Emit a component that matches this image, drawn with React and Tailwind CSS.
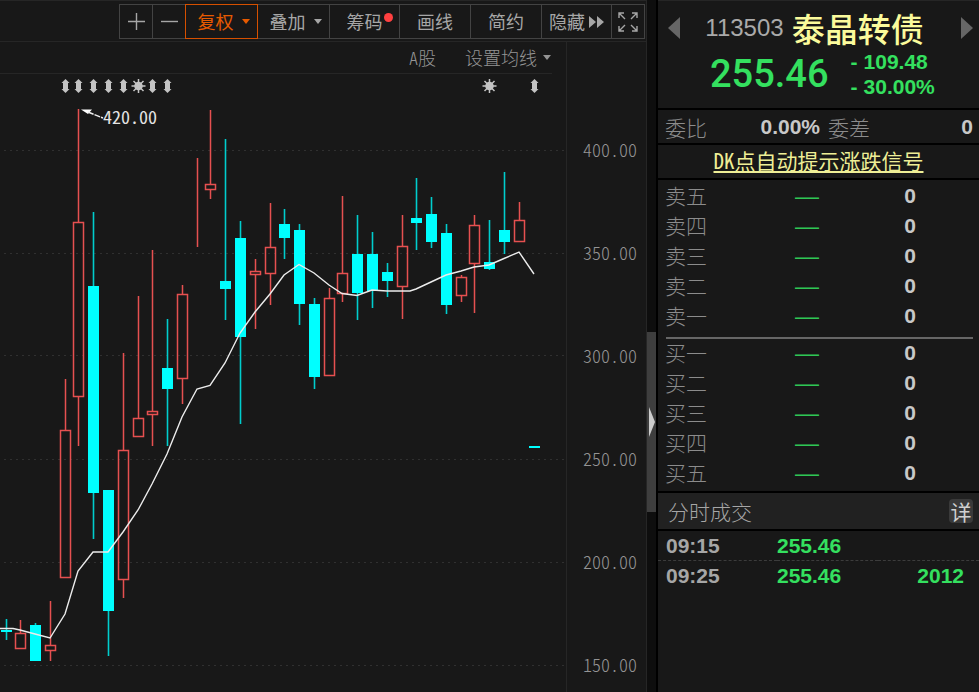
// x, high, body top, body bottom, low, direction
const candles = [
  [6, 619, 630, 632, 640, "down"],
  [20, 620, 633, 648, 648, "up"],
  [35, 623, 625, 661, 661, "down"],
  [50, 601, 645, 650, 661, "up"],
  [65, 379, 430, 577, 577, "up"],
  [78, 109, 222, 396, 446, "up"],
  [93, 212, 286, 493, 539, "down"],
  [108, 490, 490, 611, 656, "down"],
  [123, 353, 450, 579, 598, "up"],
  [138, 296, 418, 436, 436, "up"],
  [152, 250, 411, 414, 446, "up"],
  [167, 319, 368, 389, 446, "down"],
  [182, 285, 294, 378, 404, "up"],
  [197, 158, 199, 199, 247, "up"],
  [210, 110, 184, 189, 199, "up"],
  [225, 139, 281, 289, 320, "down"],
  [240, 221, 238, 337, 424, "down"],
  [255, 259, 271, 274, 329, "up"],
  [270, 203, 247, 273, 305, "up"],
  [284, 209, 224, 238, 259, "down"],
  [299, 224, 230, 304, 325, "down"],
  [314, 298, 304, 377, 389, "down"],
  [329, 288, 298, 375, 375, "up"],
  [342, 196, 273, 293, 302, "up"],
  [357, 215, 254, 293, 320, "down"],
  [372, 232, 254, 291, 308, "down"],
  [387, 263, 272, 281, 297, "down"],
  [402, 215, 246, 286, 319, "up"],
  [416, 178, 218, 223, 250, "down"],
  [431, 197, 214, 242, 248, "down"],
  [446, 224, 233, 305, 314, "down"],
  [461, 275, 277, 295, 302, "up"],
  [474, 215, 225, 263, 313, "up"],
  [489, 220, 262, 269, 270, "down"],
  [504, 172, 230, 242, 254, "down"],
  [519, 202, 220, 241, 241, "up"],
  [534, 446, 446, 448, 448, "down"],
];

const average =
  "0,628.5 13,628.5 20,630 35,634 50,638 65,614 78,571 93,552 108,552 123,532 138,510 152,484 167,454 182,417 197,389 210,385.5 225,363 240,333 255,312 270,294 284,275 299,264.5 314,273 329,285 342,293.5 357,295.5 372,290 387,291 410,291 416,289 431,282 446,275 461,271 474,267 489,265 504,258.5 519,252 534,274";

const gridLines = [150, 253, 355, 459, 562, 665];
const prices = ["400.00", "350.00", "300.00", "250.00", "200.00", "150.00"];
const arrows = [65, 78, 93, 108, 123, 152, 167, 534];
const stars = [138, 489];

const sells = ["卖五", "卖四", "卖三", "卖二", "卖一"];
const buys = ["买一", "买二", "买三", "买四", "买五"];

const trades = [
  { time: "09:15", price: "255.46", volume: "" },
  { time: "09:25", price: "255.46", volume: "2012" },
];

function Caret() {
  return (
    <svg width="8" height="5" viewBox="0 0 8 5" fill="currentColor" aria-hidden="true">
      <path d="M0 0H8L4 5Z" />
    </svg>
  );
}

function ToolButton({ className = "", active = false, children, ...rest }) {
  return (
    <button
      type="button"
      className={`relative -ml-px flex h-[35px] items-center justify-center border ${
        active
          ? "z-10 border-[#d65000] text-[#e65a00]"
          : "border-[#434343] text-[#a6a6a6]"
      } ${className}`}
      {...rest}
    >
      {children}
    </button>
  );
}

function Toolbar() {
  return (
    <div className="flex h-[42px] justify-end border-y border-[#262626] pt-[3px] pr-px text-[18px]">
      <ToolButton className="w-[34px]" aria-label="放大">
        <svg width="17" height="17" viewBox="0 0 17 17" stroke="currentColor" strokeWidth="1.4">
          <path d="M8.5 0V17M0 8.5H17" />
        </svg>
      </ToolButton>
      <ToolButton className="w-[34px]" aria-label="缩小">
        <svg width="17" height="17" viewBox="0 0 17 17" stroke="currentColor" strokeWidth="1.4">
          <path d="M0 8.5H17" />
        </svg>
      </ToolButton>
      <ToolButton className="w-[73px] gap-2 pl-1" active>
        复权 <Caret />
      </ToolButton>
      <ToolButton className="w-[73px] gap-2 pl-1">
        叠加 <Caret />
      </ToolButton>
      <ToolButton className="w-[71px]">
        筹码
        <span className="absolute top-2 right-1.5 size-[9px] rounded-full bg-[#ff4040]" />
      </ToolButton>
      <ToolButton className="w-[72px]">画线</ToolButton>
      <ToolButton className="w-[72px]">简约</ToolButton>
      <ToolButton className="w-[71px] gap-1">
        隐藏
        <svg width="15" height="12" viewBox="0 0 15 12" fill="currentColor">
          <path d="M0 0L7 6L0 12ZM8 0L15 6L8 12Z" />
        </svg>
      </ToolButton>
      <ToolButton className="w-[34px]" aria-label="全屏">
        <svg width="20" height="20" viewBox="0 0 20 20" fill="none" stroke="currentColor" strokeWidth="1.4">
          <path d="M1 6V1H6M1 1L7 7M14 1H19V6M19 1L13 7M1 14V19H6M1 19L7 13M14 19H19V14M19 19L13 13" />
        </svg>
      </ToolButton>
    </div>
  );
}

function Candle({ data }) {
  const [x, high, top, bottom, low, dir] = data;
  const cx = x + 0.5;
  if (dir === "down") {
    return (
      <g>
        <path d={`M${cx} ${high}V${low}`} stroke="#00cdcd" strokeWidth="1.6" />
        <rect x={x - 5} y={top} width="11" height={bottom - top} fill="#00ffff" />
      </g>
    );
  }
  return (
    <g stroke="#e65050" strokeWidth="1.5" fill="none">
      <path d={`M${cx} ${high}V${top}M${cx} ${bottom}V${low}`} />
      <rect x={x - 4.5} y={top + 0.5} width="10" height={bottom - top} />
    </g>
  );
}

function Chart() {
  return (
    <svg
      className="block w-full"
      viewBox="0 74 566 618"
      role="img"
      aria-label="K线图"
    >
      {gridLines.map((y) => (
        <path key={y} d={`M4 ${y + 0.5}H566`} stroke="#303030" strokeDasharray="2 4" />
      ))}
      {arrows.map((x) => (
        <path
          key={x}
          transform={`translate(${x + 0.5} 86)`}
          d="M0 -7L4 -3H2.5V3H4L0 7L-4 3H-2.5V-3H-4Z"
          fill="#c4c4c4"
        />
      ))}
      {stars.map((x) => (
        <g key={x} transform={`translate(${x + 0.5} 86)`} stroke="#c4c4c4" strokeWidth="1.5">
          <circle r="3.5" fill="#c4c4c4" />
          <path d="M0 -7V7M-7 0H7M-5 -5L5 5M-5 5L5 -5" />
        </g>
      ))}
      {candles.map((c) => (
        <Candle key={c[0]} data={c} />
      ))}
      <polyline points={average} fill="none" stroke="#ececec" strokeWidth="1.4" />
      <path d="M81 109.5L92 109.5L88 114Z" fill="#fff" />
      <path d="M88 112L103 118" stroke="#eee" strokeWidth="1.5" strokeDasharray="6 1" />
      <text
        x="103"
        y="124"
        fill="#e4e4e4"
        className="text-[18px] [font-feature-settings:'hwid']"
      >
        420.00
      </text>
    </svg>
  );
}

function OrderTable({ rows }) {
  return (
    <table className="w-full table-fixed">
      <tbody>
        {rows.map((label) => (
          <tr key={label} className="h-[30px] align-top">
            <th
              scope="row"
              className="w-[100px] pl-[7px] text-left leading-[26px] font-light text-[#8c8c8c]"
            >
              {label}
            </th>
            <td className="w-[98px] text-center font-['Liberation_Sans',sans-serif] text-[24px] leading-[28px] text-[#2fc655]">
              —
            </td>
            <td className="pr-[63px] text-right font-['Liberation_Sans',sans-serif] leading-[28px] font-bold text-[#c8c8c8]">
              0
            </td>
          </tr>
        ))}
      </tbody>
    </table>
  );
}

function QuotePanel() {
  return (
    <aside className="w-[321px] shrink-0 border-t border-[#262626] text-[21px] leading-[30px]">
      <header className="h-[109px] border-b-2 border-black pt-2">
        <div className="flex items-center justify-between pr-1.5 pl-2.5">
          <button type="button" aria-label="上一个" className="text-[#666]">
            <svg width="12" height="22" viewBox="0 0 12 22" fill="currentColor">
              <path d="M12 0V22L0 11Z" />
            </svg>
          </button>
          <h1 className="mr-3 flex items-center gap-2 leading-[38px]">
            <span className="font-['Liberation_Sans',sans-serif] text-[24px] text-[#aaa]">
              113503
            </span>
            <span className="text-[33px] font-medium text-[#fbfb9c]">泰晶转债</span>
          </h1>
          <button type="button" aria-label="下一个" className="text-[#666]">
            <svg width="12" height="22" viewBox="0 0 12 22" fill="currentColor">
              <path d="M0 0V22L12 11Z" />
            </svg>
          </button>
        </div>
        <div className="flex items-center gap-[22px] pt-0.5 pl-[52px] text-[#34e05f]">
          <strong className="font-['Roboto',sans-serif] text-[38px] font-medium">255.46</strong>
          <div className="font-['Liberation_Sans',sans-serif] leading-[25px] font-bold">
            <p className="flex gap-1.5"><span>-</span>109.48</p>
            <p className="flex gap-1.5"><span>-</span>30.00%</p>
          </div>
        </div>
      </header>

      <dl className="flex h-[35px] items-center border-b-2 border-black pr-1.5 pl-[7px]">
        <dt className="font-light text-[#8c8c8c]">委比</dt>
        <dd className="flex-1 text-right font-['Liberation_Sans',sans-serif] font-bold text-[#c8c8c8]">
          0.00%
        </dd>
        <dt className="pl-2 font-light text-[#8c8c8c]">委差</dt>
        <dd className="w-[103px] text-right font-['Liberation_Sans',sans-serif] font-bold text-[#c8c8c8]">
          0
        </dd>
      </dl>

      <div className="flex h-[35px] items-start justify-center border-b-2 border-black">
        <a
          href="#dk"
          className="text-[#eeee96] underline underline-offset-2 [font-feature-settings:'hwid']"
        >
          DK点自动提示涨跌信号
        </a>
      </div>

      <div className="pt-[2px]">
        <OrderTable rows={sells} />
      </div>
      <hr className="mt-[5px] mr-1.5 ml-2 border-t-2 border-[#666]" />
      <OrderTable rows={buys} />

      <div className="mt-[2px] flex h-[40px] items-center justify-between border-y-2 border-black bg-[#212121] pr-1.5 pl-2.5">
        <h2 className="font-light text-[#a6a6a6]">分时成交</h2>
        <button type="button" className="size-6 rounded-sm bg-[#3a3a3a] leading-6 text-[#d0d0d0]">
          详
        </button>
      </div>

      <table className="w-full table-fixed font-['Liberation_Sans',sans-serif] font-bold">
        <tbody>
          {trades.map((t) => (
            <tr
              key={t.time}
              className="border-b border-dashed border-[#3c3c3c] leading-[29px] last:border-0"
            >
              <td className="w-[119px] pl-2 text-[#a6a6a6]">{t.time}</td>
              <td className="text-[#34e05f]">{t.price}</td>
              <td className="pr-[15px] text-right text-[#34e05f]">{t.volume}</td>
            </tr>
          ))}
        </tbody>
      </table>
    </aside>
  );
}

function App() {
  return (
    <div className="flex min-h-screen overflow-hidden bg-[#181818] font-['Noto_Sans_CJK_SC',sans-serif]">
      <main className="min-w-0 flex-1 border-r border-[#262626]">
        <Toolbar />
        <div className="flex">
          <section className="min-w-0 flex-1">
            <div className="mr-3.5 flex h-8 items-center justify-end gap-[29px] border-b border-[#262626] text-[18px] font-light text-[#949494]">
              <button type="button" className="[font-feature-settings:'hwid']">A股</button>
              <button type="button" className="flex items-center gap-1.5 pr-px">
                设置均线 <Caret />
              </button>
            </div>
            <Chart />
          </section>
          <div className="w-[80px] border-l border-[#262626] pt-14 text-right text-[18px] font-light text-[#949494] [font-feature-settings:'hwid']">
            {prices.map((p) => (
              <div key={p} className="flex h-[103px] items-center justify-end pr-[9px]">
                {p}
              </div>
            ))}
          </div>
        </div>
      </main>

      <div className="w-[11px] shrink-0 border-r-2 border-black bg-[#0e0e0e] pt-[332px]">
        <button
          type="button"
          aria-label="收起"
          className="flex h-[180px] w-full items-center justify-center bg-[#3e3e3e] text-[#ccc]"
        >
          <svg width="6" height="30" viewBox="0 0 6 30" fill="currentColor">
            <path d="M0 0L6 15L0 30Z" />
          </svg>
        </button>
      </div>

      <QuotePanel />
    </div>
  );
}

export default App;
